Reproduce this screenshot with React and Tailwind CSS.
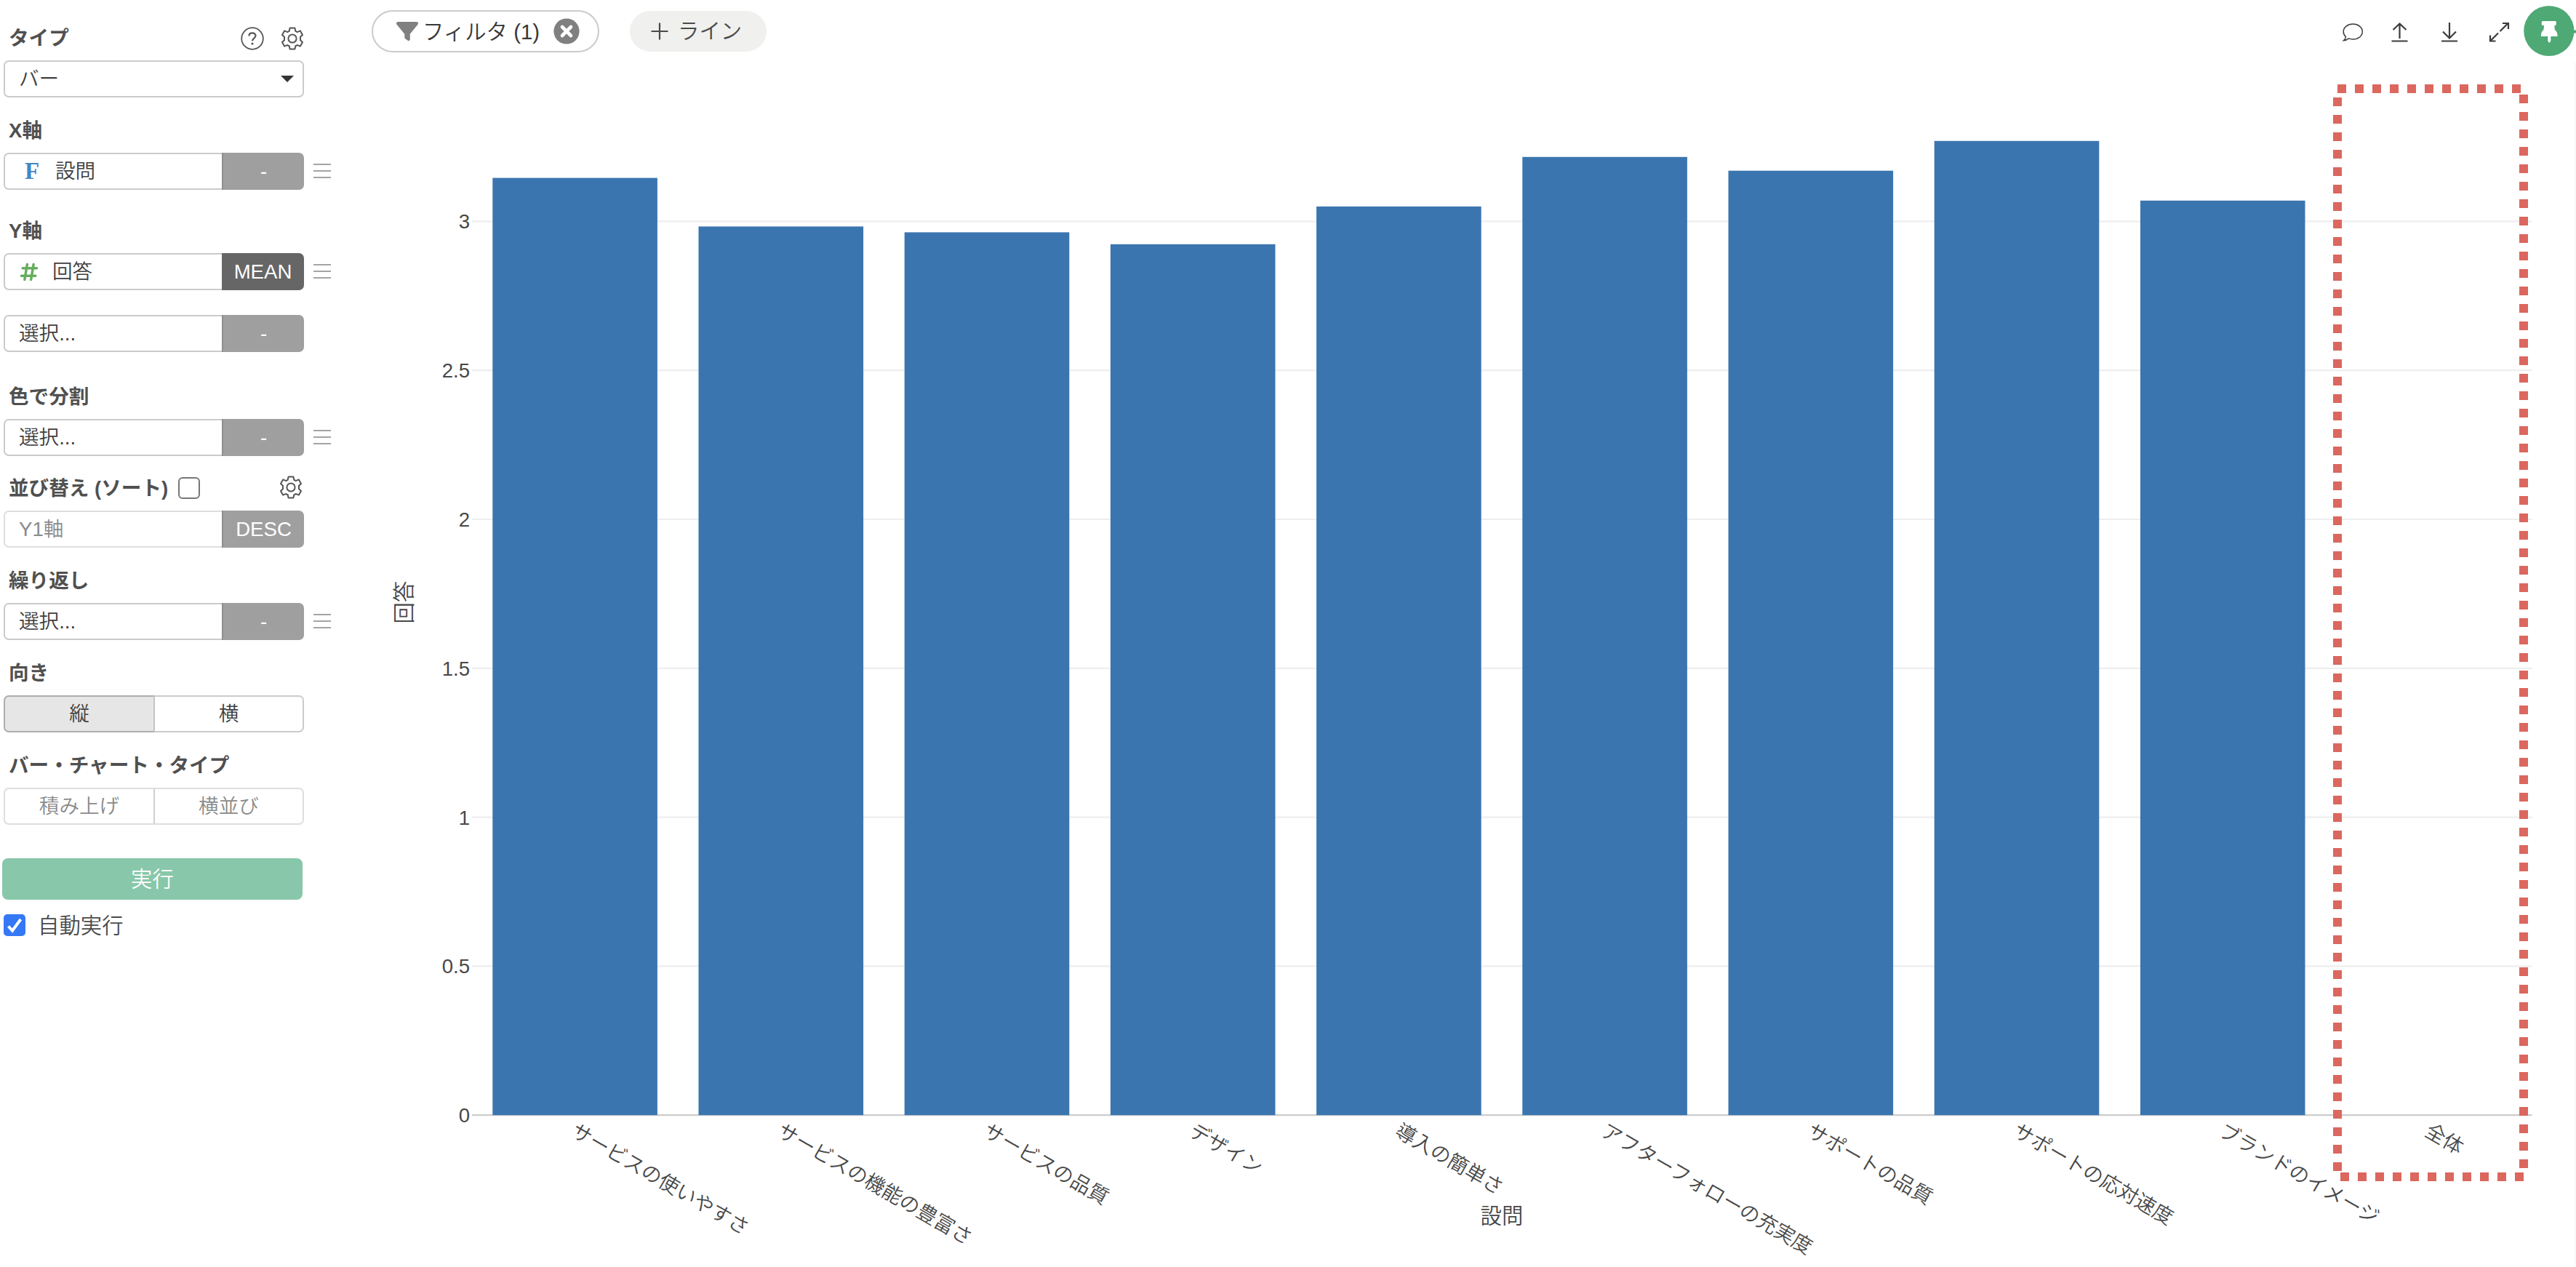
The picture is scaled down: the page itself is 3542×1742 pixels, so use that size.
import { FaFilter, FaHashtag } from "react-icons/fa6";

const CATEGORIES = [
  { name: "サービスの使いやすさ", top: 244.6 },
  { name: "サービスの機能の豊富さ", top: 311.4 },
  { name: "サービスの品質", top: 319.4 },
  { name: "デザイン", top: 335.8 },
  { name: "導入の簡単さ", top: 283.9 },
  { name: "アフターフォローの充実度", top: 215.8 },
  { name: "サポートの品質", top: 234.7 },
  { name: "サポートの応対速度", top: 193.8 },
  { name: "ブランドのイメージ", top: 275.8 },
  { name: "全体", top: null },
];

const PLOT_LEFT = 649;
const PLOT_RIGHT = 3481.5;
const BASE_Y = 1533.2;
const UNIT = 409.6;
const STEP = 283.2;
const TICKS = [0, 0.5, 1, 1.5, 2, 2.5, 3];

function Gear({ className = "" }) {
  return (
    <svg viewBox="0 0 32 32" className={className} fill="none" stroke="#555555" strokeWidth="2" strokeLinejoin="round">
      <path d="M12.6 1.4h6.8l.9 4.3q1.3.5 2.3 1.4l4.3-1.7 3.1 5.6-3 2.800v4.400l3 2.800-3.100 5.600-4.300-1.700q-1 .9-2.300 1.400l-.9 4.300h-6.800l-.9-4.300q-1.300-.5-2.300-1.400l-4.300 1.700L2 21l3-2.800v-4.400L2 11l3.100-5.600 4.300 1.700q1-.9 2.300-1.400z" />
      <circle cx="16" cy="16" r="5.6" />
    </svg>
  );
}

function Help() {
  return (
    <svg viewBox="0 0 32 32" className="h-8 w-8" fill="none" stroke="#555555" strokeWidth="1.8">
      <circle cx="16" cy="16" r="14.8" />
      <path d="M11.4 12.4c0-2.5 1.9-4.1 4.500-4.100s4.600 1.500 4.600 3.800c0 3.400-4.500 3.500-4.500 7.200" strokeWidth="2.2" />
      <circle cx="16" cy="23" r="1.6" fill="#555555" stroke="none" />
    </svg>
  );
}

function Menu() {
  return (
    <div className="mb-[2px] ml-[13px] flex h-5 w-6 flex-col justify-between">
      <div className="h-[2px] bg-[#a4a4a4]" />
      <div className="h-[2px] bg-[#a4a4a4]" />
      <div className="h-[2px] bg-[#a4a4a4]" />
    </div>
  );
}

function Label({ children, className = "" }) {
  return <div className={`flex h-[62px] items-center pt-px pl-3 font-bold text-[#505050] ${className}`}>{children}</div>;
}

function Field({ children, action = "-", dark, faded, menu = true, className = "" }) {
  return (
    <div className={`flex h-[51px] items-center pl-[5px] ${className}`}>
      <div
        className={`flex h-full w-[300px] items-center rounded-l-[7px] border-2 border-r-0 pl-[19px] ${
          faded ? "border-[#dedede] text-[#8a8a8a]" : "border-[#cbcbcb] text-[#404040]"
        }`}
      >
        {children}
      </div>
      <div
        className={`flex h-full w-[113px] items-center justify-center rounded-r-[7px] pt-px text-white ${
          dark ? "bg-[#666666]" : "border-l-2 border-[#8e8e8e] bg-[#9f9f9f]"
        }`}
      >
        {action}
      </div>
      {menu && <Menu />}
    </div>
  );
}

function Sidebar() {
  return (
    <aside className="w-[490px] shrink-0 pt-[21px] text-[27.6px] leading-none">
      <Label className="relative">
        タイプ
        <div className="absolute top-4 left-[331px] flex gap-[23px]">
          <Help />
          <Gear className="h-8 w-8" />
        </div>
      </Label>
      <div className="ml-[5px] flex h-[51px] w-[413px] items-center justify-between rounded-[7px] border-2 border-[#cbcbcb] pr-3 pl-[19px] text-[#404040]">
        バー
        <svg viewBox="0 0 18 9" className="h-[9px] w-[18px]">
          <path d="M0 0h18L9 9z" fill="#333" />
        </svg>
      </div>
      <Label className="mt-[14px]">X軸</Label>
      <Field>
        <span className="ml-2 w-[42px] font-['Liberation_Serif',serif] text-[33px] font-bold text-[#4387c7]">F</span>
        設問
      </Field>
      <Label className="mt-[25px]">Y軸</Label>
      <Field action="MEAN" dark>
        <FaHashtag className="mr-[19px] ml-px h-7 w-[26px] text-[#66ad5f]" />
        回答
      </Field>
      <Field className="mt-[34px]" menu={false}>選択...</Field>
      <Label className="mt-[30px]">色で分割</Label>
      <Field>選択...</Field>
      <Label className="relative mt-[13px]">
        並び替え (ソート)
        <div className="absolute top-[16px] left-[245px] h-[30px] w-[30px] rounded-[6px] border-2 border-[#767676]" />
        <Gear className="absolute top-[14px] left-[384px] h-8 w-8" />
      </Label>
      <Field faded menu={false} action="DESC">Y1軸</Field>
      <Label className="mt-[14px]">繰り返し</Label>
      <Field>選択...</Field>
      <Label className="mt-[14px]">向き</Label>
      <div className="ml-[5px] flex h-[51px] w-[413px] text-[#404040]">
        <div className="flex w-[208px] items-center justify-center rounded-l-[7px] border-2 border-[#adadad] border-r-[#c4c4c4] bg-[#e6e6e6]">縦</div>
        <div className="flex flex-1 items-center justify-center rounded-r-[7px] border-2 border-l-0 border-[#cbcbcb]">横</div>
      </div>
      <Label className="mt-[14px]">バー・チャート・タイプ</Label>
      <div className="ml-[5px] flex h-[51px] w-[413px] text-[#8a8a8a]">
        <div className="flex w-[208px] items-center justify-center rounded-l-[7px] border-2 border-[#dedede] border-r-[#d0d0d0]">積み上げ</div>
        <div className="flex flex-1 items-center justify-center rounded-r-[7px] border-2 border-l-0 border-[#dedede]">横並び</div>
      </div>
      <div className="mt-[46px] ml-[3px] flex h-[57px] w-[413px] items-center justify-center rounded-[8px] bg-[#88c7aa] text-[29.4px] text-white">
        実行
      </div>
      <div className="mt-5 ml-[5px] flex items-center gap-[17px] text-[29.4px] text-[#4a4a4a]">
        <svg viewBox="0 0 30 30" className="h-[30px] w-[30px]">
          <rect width="30" height="30" rx="5" fill="#3478f6" />
          <path d="M6.5 16.5l5.5 6L23.5 7" fill="none" stroke="#fff" strokeWidth="4" />
        </svg>
        <span className="pt-px">自動実行</span>
      </div>
    </aside>
  );
}

function Toolbar() {
  return (
    <header className="flex h-[86px] items-center justify-between pl-[21px] text-[29.4px] leading-none">
      <div className="flex items-center gap-[42px]">
        <div className="flex h-[58px] w-[313px] items-center rounded-full border-2 border-[#cbcbcb] pl-8 text-[#383838]">
          <FaFilter className="mr-1.5 h-[30px] w-[30px] text-[#808080]" />
          <span className="w-[180px] pt-0.5 whitespace-nowrap">フィルタ (1)</span>
          <svg viewBox="0 0 36 36" className="h-9 w-9">
            <circle cx="18" cy="18" r="17.6" fill="#808080" />
            <path d="M12 12l12 12M24 12L12 24" stroke="#fff" strokeWidth="4.6" strokeLinecap="round" />
          </svg>
        </div>
        <div className="flex h-[56px] w-[188px] items-center rounded-full bg-[#f0f0ee] pl-[29px] text-[#4a4a4a]">
          <svg viewBox="0 0 24 24" className="mr-[13px] h-6 w-6">
            <path d="M12 0.5v23M0.5 12h23" stroke="#4a4a4a" strokeWidth="2.2" />
          </svg>
          ライン
        </div>
      </div>
      <svg viewBox="3210 0 332 86" className="h-[86px] w-[332px]" fill="none" stroke="#3c3c3c" strokeWidth="2.2">
        <path d="M3225.5 50.5c-2.3-2-3.3-4.4-3.3-7 0-6 5.8-10.4 13.1-10.4s13 4.4 13 10.4-5.7 10.5-13 10.5c-2.2 0-4.2-.4-5.8-1.1-2.2 1.7-4.8 2.9-7 2.900 1.600-1.200 2.700-3.100 3-5.300z" strokeWidth="1.5" />
        <path d="M3299.5 53V32.5M3290.5 41l9-8.5 9 8.5M3288.5 56.5h22" />
        <path d="M3368 31v21.5M3359 43.5l9 9 9-9M3357 56.5h22" />
        <path d="M3437.5 43l11-11M3441 32h8v8M3435 45.5l-11 11M3424 48.5v8h7.5" />
        <path d="M3530 43.5h12" stroke="#4fa975" strokeWidth="4" />
        <circle cx="3504.8" cy="42.5" r="34.6" fill="#4fa975" stroke="none" />
        <path d="M3496 29h17.5q1.300 0 1.300 1.800v2.400q0 1.800-1.300 1.800h-1.200l.6 6q3.700 2.700 3.700 9h-9.300v6.500l-2 2.500-2-2.500V50h-9.500q0-6.300 3.700-9l.6-6H3496q-1.300 0-1.300-1.800v-2.400q0-1.800 1.300-1.800z" fill="#fff" stroke="none" />
      </svg>
    </header>
  );
}

function Chart() {
  return (
    <svg viewBox="490 86 3052 1656" className="block h-[1656px] w-[3052px]" fill="#484848">
      {TICKS.map((t) => (
        <g key={t}>
          <line
            x1={PLOT_LEFT}
            x2={PLOT_RIGHT}
            y1={BASE_Y - t * UNIT}
            y2={BASE_Y - t * UNIT}
            stroke={t === 0 ? "#cccccc" : "#eeeeee"}
            strokeWidth="2.2"
          />
          <text x="646" y={BASE_Y - t * UNIT + 10} textAnchor="end" fontSize="27.6">
            {t}
          </text>
        </g>
      ))}
      {CATEGORIES.map((c, i) => {
        const center = PLOT_LEFT + STEP * (i + 0.5);
        return (
          <g key={c.name}>
            {c.top !== null && <rect x={center - 113.3} y={c.top} width="226.6" height={BASE_Y - c.top} fill="#3a75af" />}
            <text transform={`translate(${center - 7} 1560.5) rotate(30)`} fontSize="27.6">
              {c.name}
            </text>
          </g>
        );
      })}
      <text x="2065" y="1682" textAnchor="middle" fontSize="29.4">
        設問
      </text>
      <text transform="translate(565.5 828) rotate(-90)" textAnchor="middle" fontSize="29.4">
        回答
      </text>
      <rect x="3539.5" y="86" width="2.5" height="1656" fill="#f9f9f9" />
      <g stroke="#db675e" strokeWidth="12" strokeDasharray="12 12">
        <line x1="3214" x2="3466" y1="122" y2="122" />
        <line x1="3214" x2="3214" y1="134" y2="1610" />
        <line x1="3470" x2="3470" y1="130" y2="1606" />
        <line x1="3218" x2="3470" y1="1618" y2="1618" />
      </g>
    </svg>
  );
}

export default function App() {
  return (
    <div className="flex h-[1742px] w-[3542px] overflow-hidden bg-white font-['Liberation_Sans','Noto_Sans_CJK_JP',sans-serif] font-[350]">
      <Sidebar />
      <main className="w-[3052px]">
        <Toolbar />
        <Chart />
      </main>
    </div>
  );
}
